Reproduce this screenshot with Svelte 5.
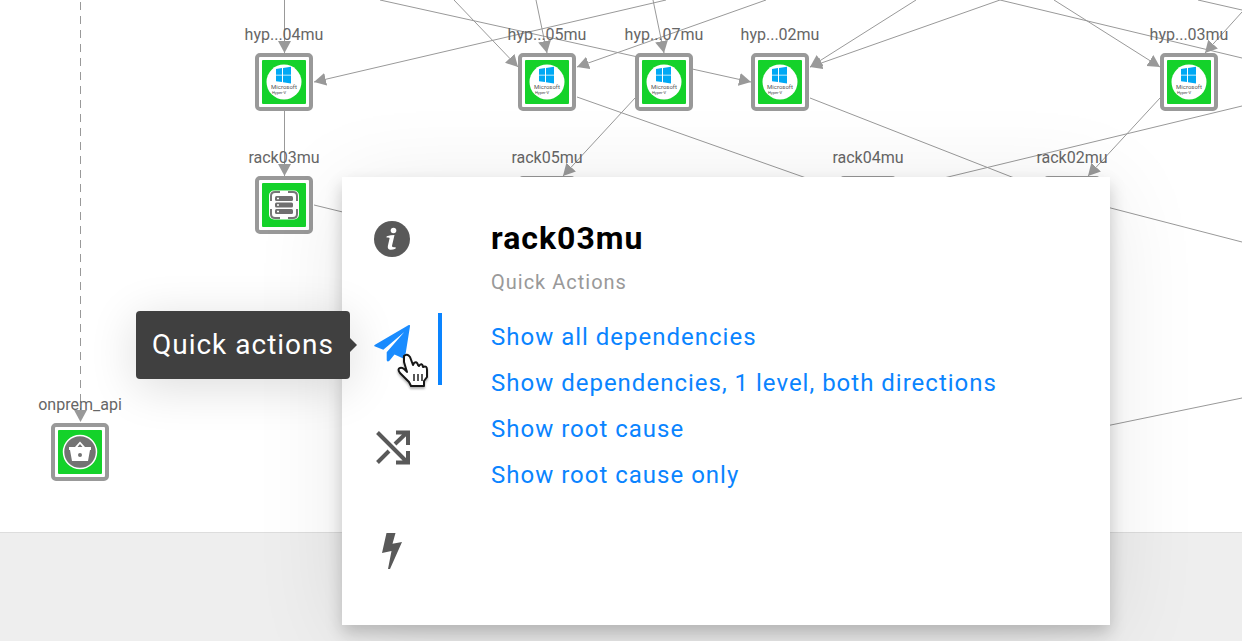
<script>
  const nodes = [
    { name: 'hyp...04mu', x: 284, y: 82, kind: 'host' },
    { name: 'hyp...05mu', x: 547, y: 82, kind: 'host' },
    { name: 'hyp...07mu', x: 664, y: 82, kind: 'host' },
    { name: 'hyp...02mu', x: 780, y: 82, kind: 'host' },
    { name: 'hyp...03mu', x: 1189, y: 82, kind: 'host' },
    { name: 'rack03mu', x: 284, y: 205, kind: 'rack' },
    { name: 'rack05mu', x: 547, y: 205, kind: 'rack' },
    { name: 'rack04mu', x: 868, y: 205, kind: 'rack' },
    { name: 'rack02mu', x: 1072, y: 205, kind: 'rack' },
    { name: 'onprem_api', x: 80, y: 452, kind: 'service' }
  ];

  const arrows = [
    'M284.500 0V53', 'M284.500 111V176', 'M666 0L314 82', 'M454 0L518 67',
    'M536 0L547 53', 'M653 0L664 53', 'M766 0L577 67', 'M380 0L751 82',
    'M916 0L810 67', 'M1000 0L810 67', 'M1054 0L1160 67', 'M1242 12L1205 53',
    'M635 98L563 176', 'M1160 98L1088 176'
  ];

  const lines = [
    'M1000 0L1242 58', 'M1198 0L1242 10', 'M577 97L860 197', 'M810 98L1050 192',
    'M890 191L1242 106', 'M314 205L400 226', 'M1072 198L1242 242', 'M1072 433L1242 398'
  ];

  const actions = [
    'Show all dependencies',
    'Show dependencies, 1 level, both directions',
    'Show root cause',
    'Show root cause only'
  ];

  const tabs = ['Information', 'Quick actions', 'Dependencies', 'Events'];
  let active = $state(1);
</script>

<main class="page">
  <section class="canvas" aria-label="Dependency map">
    <svg class="edges" width="1242" height="532" aria-hidden="true">
      <defs>
        <marker id="tip" markerUnits="userSpaceOnUse" markerWidth="14" markerHeight="14" refX="12" refY="6.500" orient="auto">
          <path d="M0 0L12 6.500L0 13Z" fill="#999" />
        </marker>
      </defs>
      {#each lines as d}<path {d} />{/each}
      {#each arrows as d}<path {d} marker-end="url(#tip)" />{/each}
      <path d="M80.500 2V422" stroke-dasharray="8 6" marker-end="url(#tip)" />
    </svg>

    {#each nodes as node}
      <div class="node" style:left="{node.x}px" style:top="{node.y}px">
        <span class="label">{node.name}</span>
        <div class="frame">
          <div class="status">
            {#if node.kind === 'host'}
              <svg width="44" height="44" viewBox="0 0 44 44">
                <circle cx="22" cy="22" r="17.5" fill="#fff" />
                <path fill="#00a9f4" d="M14 9l6-.9v6.7h-6zM21 8l8-1.2v8h-8zM14 15.6h6v6.500l-6-.9zM21 15.6h8v8l-8-1.3z" />
                <text x="22" y="29" text-anchor="middle" font-size="6" fill="#555">Microsoft</text>
                <text x="10" y="34" font-size="4" fill="#444">Hyper-V</text>
              </svg>
            {:else if node.kind === 'rack'}
              <svg width="44" height="44" viewBox="0 0 44 44">
                <rect x="7" y="7.500" width="30" height="29" rx="5" fill="#fff" />
                <path fill="none" stroke="#777" stroke-width="2" d="M9 18v-5q0-4 4-4h5M26 9h5q4 0 4 4v5M35 26v5q0 4-4 4h-5M18 35h-5q-4 0-4-4v-5" />
                <g fill="#707070"><rect x="13" y="13" width="18" height="5" rx="1.500" /><rect x="13" y="19.500" width="18" height="5" rx="1.500" /><rect x="13" y="26" width="18" height="5" rx="1.500" /></g>
                <path stroke="#fff" stroke-width="1.500" d="M15 15.500h2M15 22h2M15 28.500h2" />
              </svg>
            {:else}
              <svg width="44" height="44" viewBox="0 0 44 44">
                <circle cx="22" cy="22" r="16.500" fill="#737373" stroke="#fff" stroke-width="1.500" />
                <path fill="#fff" d="M11 17h6l5-5.500 5 5.500h6v3h-1l-2 11H14l-2-11h-1zM19.500 17h5L22 14z" />
                <circle cx="22" cy="25" r="2" fill="#737373" />
              </svg>
            {/if}
          </div>
        </div>
      </div>
    {/each}
  </section>

  <section class="panel">
    <nav class="rail" aria-label="Node details">
      {#each tabs as tab, i}
        <button class:active={active === i} aria-label={tab} onclick={() => (active = i)}>
          {#if i === 0}
            <svg width="36" height="40" viewBox="0 0 36 40">
              <circle cx="18" cy="18" r="18" fill="currentColor" />
              <circle cx="19.500" cy="9.500" r="2.800" fill="#fff" />
              <path fill="#fff" d="M12.700 15.200Q17 14.100 20.500 14L18 24.800Q17.700 26.800 21.700 26.200L21.500 27.700Q18.500 29.100 16 28.800Q13.200 28.300 13.900 24.800L15.600 17.300Q15.800 16.200 12.500 16.600Z" />
            </svg>
          {:else if i === 1}
            <svg width="36" height="40" viewBox="0 0 36 40">
              <path fill="currentColor" d="M.5 21.200Q-.3 20.400 1 19.700L34.300.2Q36.200-.6 36 1.200L31 32.500Q30.800 34 29.300 33.400L20.500 29.500L15.400 35.700Q13.500 37.300 12.700 35.200V27.200L30.300 7L9.300 24.800Z" />
            </svg>
          {:else if i === 2}
            <svg width="36" height="40" viewBox="0 0 36 40">
              <path fill="none" stroke="currentColor" stroke-width="4" d="M3.500 3.500L33.500 33.500M3.500 33.500L15 22M21 15L33 3.500M22 3.500H34V16M22 33.500H34V22" />
            </svg>
          {:else}
            <svg width="36" height="40" viewBox="0 0 36 40">
              <path fill="currentColor" d="M12.500 0H21.500L18.500 10.800L28 9L16 36H14L17.500 18L8 20Z" />
            </svg>
          {/if}
          {#if i === 1}<span class="tooltip" role="tooltip">Quick actions</span>{/if}
        </button>
      {/each}
    </nav>
    <div class="details">
      <h1>rack03mu</h1>
      <h2>Quick Actions</h2>
      <ul>
        {#each actions as action}
          <li><a href="#action">{action}</a></li>
        {/each}
      </ul>
    </div>
    <svg class="pointer" width="36" height="38" viewBox="0 0 36 38" aria-hidden="true">
      <path fill="#fff" stroke="#161616" stroke-width="2" stroke-linejoin="round" d="M8 4Q11 1 14 5L17 13L18 11Q21 9 22 13L23 14Q26 10 27 15Q31 13 31 18V25L28 29V34H15L13 30L9 26L4 21Q1 17 4 16Q7 15 11 20L8 10Z" />
      <path stroke="#222" stroke-width="1.500" d="M18 22V29M22 22V29M26 22V29" />
    </svg>
  </section>
</main>

<style>
  :global(body) {
    margin: 0;
    font-family: Roboto, sans-serif;
  }
  .page {
    position: relative;
    min-height: 100vh;
    background: #eee;
    overflow: hidden;
  }
  .canvas {
    position: relative;
    height: 532px;
    background: #fff;
    border-bottom: 1px solid #ddd;
    overflow: hidden;
  }
  .edges {
    display: block;
    fill: none;
    stroke: #999;
    stroke-width: 1;
  }
  .edges marker path {
    stroke: none;
  }
  .node {
    position: absolute;
    width: 58px;
    height: 58px;
    margin: -29px;
  }
  .label {
    position: absolute;
    bottom: 100%;
    left: 50%;
    transform: translateX(-50%);
    padding-bottom: 9px;
    font-size: 16px;
    line-height: 18px;
    color: #666;
  }
  .frame {
    padding: 3px;
    border: 4px solid #999;
    border-radius: 5px;
    background: #fff;
  }
  .status {
    height: 44px;
    border-radius: 1px;
    background: #14d22a;
  }
  .status svg {
    display: block;
  }
  .panel {
    position: absolute;
    top: 177px;
    left: 342px;
    display: flex;
    gap: 49px;
    width: 62%;
    max-width: 768px;
    box-sizing: border-box;
    padding: 32px 0;
    background: #fff;
    box-shadow: 0 8px 16px rgba(0, 0, 0, 0.2), 0 12px 88px rgba(0, 0, 0, 0.09);
  }
  .rail {
    display: flex;
    flex-direction: column;
    gap: 32px;
    width: 100px;
  }
  .rail button {
    position: relative;
    display: flex;
    align-items: center;
    height: 72px;
    padding: 0 0 8px 32px;
    border: 0;
    border-right: 4px solid transparent;
    background: none;
    color: #595959;
    cursor: pointer;
  }
  .rail button.active {
    border-color: #0a84ff;
    color: #1a8cff;
  }
  .tooltip {
    position: absolute;
    right: 88px;
    top: -2px;
    padding: 16px;
    border-radius: 4px;
    background: #404040;
    color: #fff;
    font: 28px/36px Roboto, sans-serif;
    letter-spacing: 1px;
    white-space: nowrap;
    box-shadow: 0 8px 48px rgba(0, 0, 0, 0.14);
  }
  .tooltip::after {
    content: '';
    position: absolute;
    left: 100%;
    top: 27px;
    border: 7px solid transparent;
    border-left-color: #404040;
    border-right: 0;
  }
  .details {
    flex: 1;
    padding-top: 8px;
    letter-spacing: 1px;
  }
  h1 {
    margin: 0;
    font-size: 32px;
    line-height: 42px;
    font-weight: 700;
    color: #000;
  }
  h2 {
    margin: 9px 0 25px;
    font-size: 20px;
    line-height: 28px;
    font-weight: 400;
    color: #999;
  }
  ul {
    display: flex;
    flex-direction: column;
    gap: 14px;
    margin: 0;
    padding: 0;
    list-style: none;
    font-size: 24px;
    line-height: 32px;
  }
  a {
    color: #0a84ff;
    text-decoration: none;
  }
  .pointer {
    position: absolute;
    left: 54px;
    top: 175px;
    filter: drop-shadow(0 2px 1px rgba(0, 0, 0, 0.3));
    pointer-events: none;
  }
</style>
